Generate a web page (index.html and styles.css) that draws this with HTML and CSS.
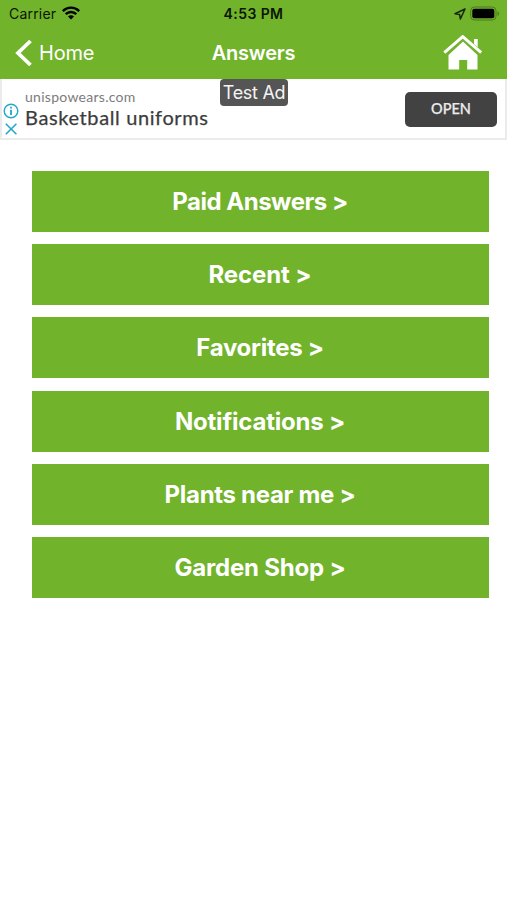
FILE: index.html
```html
<!DOCTYPE html>
<html lang="en">
<head>
<meta charset="utf-8">
<title>Answers</title>
<link rel="stylesheet" href="styles.css">
</head>
<body>
<header class="header">
  <div class="status">
    <div class="status-left">
      <span class="carrier">Carrier</span>
      <svg class="wifi" width="18" height="14" viewBox="0 0 18 14" fill="none" stroke="#000" stroke-width="2.4"><path d="M.8 5.1C5.4.5 12.6.5 17.2 5.1M3.7 8.2c3-2.9 7.6-2.9 10.6 0"/><path d="M6 10.5c1.7-1.6 4.3-1.6 6 0L9 13.6z" fill="#000" stroke="none"/></svg>
    </div>
    <span class="time">4:53 PM</span>
    <div class="status-right">
      <svg width="12" height="12" viewBox="0 0 12 12" fill="none" stroke="#17270b" stroke-width="1.5" stroke-linejoin="round"><path d="M11 1 1 5.8l4.6.6.8 4.6z"/></svg>
      <svg class="battery" width="30" height="16" viewBox="0 0 30 16"><rect x=".7" y="1" width="25.3" height="13" rx="3.7" fill="none" stroke="#4c7b20"/><rect x="2.3" y="2.8" width="22" height="9.5" rx="2" fill="#000"/><path d="M27.5 5.4c2 .7 2 3.6 0 4.3z" fill="#4c7b20"/></svg>
    </div>
  </div>
  <nav class="nav">
    <a class="back">
      <svg width="18" height="28" viewBox="0 0 18 28" fill="none" stroke="#fff" stroke-width="3.8"><path d="M15.5 2 3 14l12.5 12"/></svg>
      <span>Home</span>
    </a>
    <h1 class="title">Answers</h1>
    <a class="home" aria-label="Home">
      <svg width="40" height="36" viewBox="0 0 40 36" fill="#fff"><path d="M20 6.5 34.5 20v14.5H24.2v-9.5h-8v9.5H5.5V20z"/><path d="m1.7 18.2 18-16 18 16" fill="none" stroke="#71b32b" stroke-width="5"/><path d="m1.3 17.6 18.4-16 18.5 16" fill="none" stroke="#fff" stroke-width="3"/><path d="M31 4h3.7v8.3L31 9z"/></svg>
    </a>
  </nav>
</header>
<section class="ad">
  <div class="ad-icons">
    <svg width="16" height="16" viewBox="0 0 16 16" fill="none" stroke="#22a8c8"><circle cx="8" cy="8" r="6.8" stroke-width="1.4"/><path d="M8 6.7V12M8 3.7v1.8" stroke-width="1.8"/></svg>
    <svg width="16" height="14" viewBox="0 0 16 14" fill="none" stroke="#22a8c8" stroke-width="1.6"><path d="m2.8 1.8 10.6 10.4m0-10.4L2.8 12.2"/></svg>
  </div>
  <div class="ad-copy">
    <span class="ad-site">unispowears.com</span>
    <span class="ad-name">Basketball uniforms</span>
  </div>
  <span class="ad-tag">Test Ad</span>
  <button class="ad-open">OPEN</button>
</section>
<main class="menu">
  <a class="item paid">Paid Answers &gt;</a>
  <a class="item recent">Recent &gt;</a>
  <a class="item favorites">Favorites &gt;</a>
  <a class="item notifications">Notifications &gt;</a>
  <a class="item plants">Plants near me &gt;</a>
  <a class="item shop">Garden Shop &gt;</a>
</main>
</body>
</html>
```
FILE: styles.css
```css
* { box-sizing: border-box; }
body {
  margin: 0;
  min-height: 900px;
  background: #fff;
  font-family: Inter, "Liberation Sans", sans-serif;
  font-feature-settings: "calt" 0;
}
svg { display: block; flex: none; }
.header {
  height: 79.3px;
  background: #71b32b;
}
.status {
  display: grid;
  grid-template-columns: 1fr auto 1fr;
  align-items: center;
  height: 27px;
  padding: 0 7px 0 9px;
  font-size: 14px;
  color: #0b1504;
}
.status-left, .status-right { display: flex; align-items: center; }
.status-left { gap: 6px; }
.carrier { letter-spacing: .2px; }
.wifi { margin-top: -2px; }
.status-right { justify-content: flex-end; gap: 4px; }
.time { margin-right: 2px; font-weight: 600; letter-spacing: .4px; }
.nav {
  display: grid;
  grid-template-columns: 1fr auto 1fr;
  align-items: center;
  height: 51px;
  padding: 0 24px 0 15px;
  color: #fff;
}
.back {
  display: flex;
  align-items: center;
  gap: 6px;
  font-size: 20px;
  letter-spacing: -.2px;
}
.title {
  margin: 0 0 0 9px;
  font-size: 20px;
  font-weight: 600;
  letter-spacing: -.2px;
}
.home { justify-self: end; }
.ad {
  position: relative;
  display: flex;
  height: 61px;
  padding-left: 3px;
  border: 2px solid #ebebee;
  border-top: 0;
}
.ad-icons { margin: 24px 0 0 -2px; width: 18px; }
.ad-icons svg + svg { margin-top: 3px; }
.ad-copy {
  display: flex;
  flex-direction: column;
  margin: 9px 0 0 4px;
  font-family: Lato, sans-serif;
}
.ad-site { font-size: 14px; line-height: 17px; letter-spacing: .28px; color: #7c7c7c; }
.ad-name {
  font-size: 20px;
  line-height: 24px;
  letter-spacing: .62px;
  color: #3c3c3c;
  -webkit-text-stroke: .25px #3c3c3c;
}
.ad-tag {
  position: absolute;
  left: 218px;
  top: 0;
  width: 68px;
  height: 27px;
  border-radius: 4px;
  background: #555;
  color: #f4f4f4;
  font-size: 18px;
  line-height: 27px;
  letter-spacing: -.3px;
  text-align: center;
}
.ad-open {
  width: 92px;
  height: 35px;
  margin: 13px 8px 0 auto;
  padding: 0 0 2px;
  border: 0;
  border-radius: 5px;
  background: #424242;
  color: #ececec;
  font: 500 14.5px Lato, sans-serif;
  -webkit-text-stroke: .25px #ececec;
}
.menu {
  display: grid;
  gap: 12.3px;
  padding: 30.4px 18.5px 0 31.5px;
}
.item {
  height: 61px;
  background: #71b32b;
  color: #fff;
  font-size: 24px;
  font-weight: 700;
  line-height: 61px;
  letter-spacing: -.3px;
  text-align: center;
}
.recent { letter-spacing: -.1px; }
.paid { letter-spacing: -.5px; }
.notifications, .shop { letter-spacing: -.2px; }
```
